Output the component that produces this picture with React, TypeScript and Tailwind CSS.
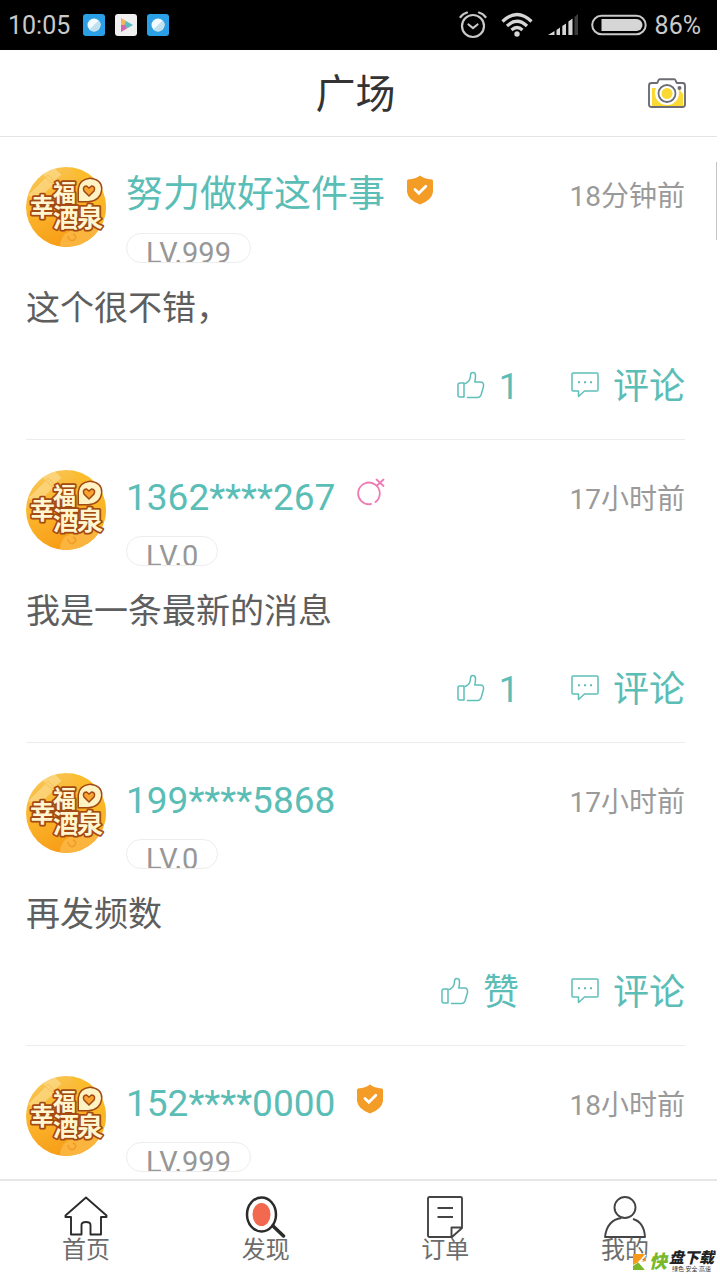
import React from "react";

type Badge = "shield" | "female" | null;

interface Post {
  name: string;
  badge: Badge;
  level: string;
  time: string;
  text: string;
  likes: string;
}

const posts: Post[] = [
  { name: "努力做好这件事", badge: "shield", level: "LV.999", time: "18分钟前", text: "这个很不错，", likes: "1" },
  { name: "1362****267", badge: "female", level: "LV.0", time: "17小时前", text: "我是一条最新的消息", likes: "1" },
  { name: "199****5868", badge: null, level: "LV.0", time: "17小时前", text: "再发频数", likes: "赞" },
  { name: "152****0000", badge: "shield", level: "LV.999", time: "18小时前", text: "", likes: "赞" },
];

function AppTile() {
  return (
    <svg width="24" height="24" viewBox="0 0 24 24" aria-hidden="true">
      <rect x="1" y="1" width="22" height="22" rx="3" fill="#2ba0e6" />
      <circle cx="12" cy="12" r="6.5" fill="#f4fbff" />
      <path d="M16.6 7.4A6.5 6.5 0 0 1 7.4 16.6Z" fill="#c3e0ee" />
    </svg>
  );
}

function PlayTile() {
  return (
    <svg width="24" height="24" viewBox="0 0 24 24" aria-hidden="true">
      <rect x="1" y="1" width="22" height="22" rx="3" fill="#f1f0f0" />
      <path d="M7 5V19L13 12Z" fill="#c96bb4" />
      <path d="M7 5L13 8.5L11 14L7 12Z" fill="#f2b45c" />
      <path d="M12 8L19 12L13 15.500L10.500 12Z" fill="#5cbdc0" />
      <path d="M7 12L11 12L13 15.500L7 19Z" fill="#d265ac" />
    </svg>
  );
}

function StatusBar() {
  return (
    <div className="mr-[3px] flex h-[50px] shrink-0 items-center bg-black pr-4 pl-2 text-[25px] leading-none text-[#c9c9c9]">
      <span className="mr-3">10:05</span>
      <div className="flex gap-2">
        <AppTile />
        <PlayTile />
        <AppTile />
      </div>
      <div className="ml-auto flex items-center">
        <svg className="mr-3.5" width="28" height="28" viewBox="0 0 28 28" fill="none" stroke="#c9c9c9" strokeWidth="2.2" strokeLinecap="round" aria-hidden="true">
          <circle cx="14" cy="15" r="11" />
          <path d="M9.500 13.500L14 17L18.500 13.500" />
          <path d="M1.500 6Q4 2.500 8 1.500M26.500 6Q24 2.500 20 1.500" />
        </svg>
        <svg className="mr-3.5" width="32" height="26" viewBox="0 0 32 26" fill="none" stroke="#d6d6d6" strokeWidth="3.2" aria-hidden="true">
          <path d="M1.500 9.500Q16 -4.500 30.500 9.500" />
          <path d="M6 14Q16 4.500 26 14" />
          <path d="M10.500 18Q16 13 21.500 18" />
          <circle cx="16" cy="22" r="2.7" fill="#d6d6d6" stroke="none" />
        </svg>
        <svg className="mr-3" width="32" height="22" viewBox="0 0 32 22" fill="#d6d6d6" aria-hidden="true">
          <path d="M1 21L7.500 17V21ZM9.500 16L13 13.500V21H9.500ZM15.300 12L19 9.500V21H15.300ZM21.400 7.500L25.500 4.500V21H21.400Z" />
          <path d="M27.500 3L31 0V21H27.500Z" fill="#3c3c3c" />
        </svg>
        <svg className="mr-2" width="56" height="22" viewBox="0 0 56 22" fill="none" aria-hidden="true">
          <rect x="1.200" y="1.700" width="53.500" height="18.600" rx="9.300" stroke="#c9c9c9" strokeWidth="2" />
          <path d="M10.500 5H45.500A6 6 0 0 1 45.500 17H10.500Z" fill="#d6d6d6" />
        </svg>
        <span>86%</span>
      </div>
    </div>
  );
}

function CameraIcon() {
  return (
    <svg width="38" height="30" viewBox="0 0 38 30" fill="none" aria-hidden="true">
      <path d="M4 10H12L18 6H26L31 11L35 16V28H4Z" fill="#fbd935" />
      <circle cx="19" cy="15" r="12" fill="#fff" />
      <path d="M11 3.500H27L35 7V14L28 8L19 5L10 8Z" fill="#fff" />
      <circle cx="19" cy="15.500" r="5.500" fill="#fbd935" />
      <circle cx="19" cy="15.500" r="8.500" stroke="#6e6c74" strokeWidth="1.800" />
      <path d="M3.500 5H9C10 5 10 1.200 11.500 1.200H26.500C28 1.200 28 5 29 5H34.500Q37 5 37 7.500V26.500Q37 29 34.500 29H3.500Q1 29 1 26.500V7.500Q1 5 3.500 5Z" stroke="#6e6c74" strokeWidth="1.900" />
      <circle cx="31.500" cy="10" r="2" fill="#6e6c74" />
    </svg>
  );
}

function Avatar() {
  return (
    <svg className="shrink-0" width="80" height="80" viewBox="0 0 80 80" role="img" aria-label="幸福酒泉">
      <defs>
        <linearGradient id="gold" x1="0" y1="0" x2="0.500" y2="1">
          <stop offset="0" stopColor="#f8cb62" />
          <stop offset="0.450" stopColor="#fbb62c" />
          <stop offset="1" stopColor="#f79b16" />
        </linearGradient>
        <clipPath id="disc">
          <circle cx="40" cy="40" r="40" />
        </clipPath>
      </defs>
      <g clipPath="url(#disc)">
        <rect width="80" height="80" fill="url(#gold)" />
        <path d="M44 0H80V80H60Q76 30 44 0Z" fill="#fbbd28" opacity="0.700" />
        <path d="M2 28L22 8L30 16L10 34ZM14 6L26 -2L36 8L26 16Z" fill="#fcdf98" stroke="#f5c25a" opacity="0.600" />
        <path d="M34 80Q34 68 44 64Q62 60 80 64V80Z" fill="#fbb43e" />
        <path d="M42 69Q43 75 48 73Q52 69 47 67" fill="none" stroke="#f29b2a" strokeWidth="1.500" />
      </g>
      <g className="font-['Noto_Sans_CJK_SC',sans-serif] font-bold" fill="#fff6cf" stroke="#a34a14" strokeWidth="3.500" strokeLinejoin="round" paintOrder="stroke">
        <text x="4" y="49" fontSize="25">幸</text>
        <text x="27" y="34" fontSize="23">福</text>
        <text x="27" y="60" fontSize="26">酒</text>
        <text x="51" y="60" fontSize="26">泉</text>
      </g>
      <path d="M53 34V22Q54 13 64 12Q75 13 75 22Q74 33 62 34Z" fill="#fff3c4" stroke="#a34a14" strokeWidth="3" paintOrder="stroke" />
      <path d="M63 29L58 24Q56 19.500 60.500 19L63 21L65.500 19Q70 19.500 68 24Z" fill="#f7a530" stroke="#a34a14" strokeWidth="1.500" />
    </svg>
  );
}

function ShieldIcon() {
  return (
    <svg width="26" height="30" viewBox="0 0 26 30" aria-hidden="true">
      <path d="M13 0.500Q17 4 25 4.500Q26 5 26 6V17Q25 25 13 29.500Q1 25 0 17V6Q0 5 1 4.500Q9 4 13 0.500Z" fill="#f39c26" />
      <path d="M8 14.500L11.800 18.200L18.800 11.200" fill="none" stroke="#fff" strokeWidth="2.800" strokeLinecap="round" />
    </svg>
  );
}

function FemaleIcon() {
  return (
    <svg width="28" height="28" viewBox="0 0 28 28" fill="none" stroke="#f07bb4" strokeWidth="1.800" strokeLinecap="round" aria-hidden="true">
      <path d="M14 26A10.800 10.800 0 1 1 18.500 24M19.500 8L26.500 1.500M19.500 1.500L26.500 8" />
    </svg>
  );
}

function ThumbIcon() {
  return (
    <svg width="28" height="28" viewBox="0 0 28 28" fill="none" stroke="#5fbfb8" strokeWidth="1.500" strokeLinecap="round" strokeLinejoin="round" aria-hidden="true">
      <path d="M7 12H2.800Q1 12 1 14V24Q1 26 2.800 26H7ZM10.500 26.500H20.500Q23 26.500 24 24L26.500 15.500Q27 11 23.500 11H17.800Q18.500 8 18.500 4.500Q18.500 1.500 15.800 1.500Q13.500 1.500 13.500 4.500Q13.500 10 8.500 12.500" />
    </svg>
  );
}

function CommentIcon() {
  return (
    <svg width="28" height="26" viewBox="0 0 28 26" fill="none" stroke="#5fbfb8" strokeWidth="1.500" strokeLinejoin="round" aria-hidden="true">
      <path d="M2 1H26Q27 1 27 2V18Q27 19 26 19H13.500L7.500 24.500V19H2Q1 19 1 18V2Q1 1 2 1Z" />
      <path d="M7 10.300H9M13 10.300H15M19 10.300H21" strokeWidth="2" />
    </svg>
  );
}

function PostItem({ post }: { post: Post }) {
  return (
    <article className="mr-[35px] ml-[26px] border-b border-[#ececec] pt-[30px] pb-8">
      <div className="flex items-start">
        <Avatar />
        <div className="ml-5 pt-2">
          <div className="flex h-10 items-center">
            <h2 className="mr-[22px] text-[37px] leading-10 whitespace-nowrap text-[#5abdb6]">{post.name}</h2>
            {post.badge === "shield" && <div className="pb-2.5"><ShieldIcon /></div>}
            {post.badge === "female" && <div className="pb-3"><FemaleIcon /></div>}
          </div>
          <div className="mt-[18px] h-[30px] w-fit overflow-hidden rounded-[15px] border border-[#ededed] px-[19px] text-[29px] leading-[38px] text-[#979797]">
            {post.level}
          </div>
        </div>
        <time className="ml-auto pt-2.5 text-[28px] leading-10 whitespace-nowrap text-[#9a9a9a]">{post.time}</time>
      </div>
      <p className="mt-[25px] h-10 text-[34px] leading-10 text-[#5e5e5e]">{post.text}</p>
      <div className="mt-[39px] flex h-10 items-center justify-end gap-[52px] text-[36px] leading-10 text-[#5abdb6]">
        <button type="button" className="flex items-center gap-3.5">
          <span className="pb-1"><ThumbIcon /></span>
          <span>{post.likes}</span>
        </button>
        <button type="button" className="flex items-center gap-3.5">
          <span className="pb-1"><CommentIcon /></span>
          <span>评论</span>
        </button>
      </div>
    </article>
  );
}

function HomeIcon() {
  return (
    <svg width="44" height="42" viewBox="0 0 44 42" fill="none" stroke="#2b2b2b" strokeWidth="1.900" strokeLinejoin="round" aria-hidden="true">
      <path d="M22 1.500L1.500 19.500V21H7V38.500H17.500V29Q17.500 26 22 26Q26.500 26 26.500 29V38.500H37V21H42.500V19.500Z" />
    </svg>
  );
}

function DiscoverIcon() {
  return (
    <svg width="42" height="42" viewBox="0 0 42 42" fill="none" stroke="#2b2b2b" aria-hidden="true">
      <ellipse cx="16.500" cy="18.500" rx="14.500" ry="17" strokeWidth="2.500" />
      <ellipse cx="16.500" cy="18.500" rx="9" ry="11.500" fill="#f2694f" stroke="none" />
      <path d="M28 30L38.500 40" strokeWidth="3.500" strokeLinecap="round" />
    </svg>
  );
}

function OrderIcon() {
  return (
    <svg width="36" height="42" viewBox="0 0 36 42" fill="none" stroke="#444" strokeWidth="1.900" strokeLinejoin="round" aria-hidden="true">
      <path d="M2.500 1H33.500Q35 1 35 2.500V32L25 41H2.500Q1 41 1 39.500V2.500Q1 1 2.500 1ZM24.500 41V31.500H35M10.500 12H26M10.500 21H26" />
    </svg>
  );
}

function ProfileIcon() {
  return (
    <svg width="42" height="42" viewBox="0 0 42 42" fill="none" stroke="#444" strokeWidth="1.900" strokeLinejoin="round" aria-hidden="true">
      <circle cx="21" cy="11.500" r="10.500" />
      <path d="M17.500 22Q3 24 1 41H41Q40 26 29 23" />
    </svg>
  );
}

const tabs = [
  { label: "首页", icon: <HomeIcon /> },
  { label: "发现", icon: <DiscoverIcon /> },
  { label: "订单", icon: <OrderIcon /> },
  { label: "我的", icon: <ProfileIcon /> },
];

function Watermark() {
  return (
    <div className="absolute right-1.5 bottom-2 flex items-center">
      <svg width="14" height="18" viewBox="0 0 14 18" aria-hidden="true">
        <path d="M0 1H12L6 9L0 12Z" fill="#f79a1c" />
        <path d="M0 17V13L6 9L12 17Z" fill="#78b82a" />
        <path d="M13 2L6 9L13 17" fill="none" stroke="#fff" strokeWidth="1.500" />
        <path d="M13 3V8L9 9Z" fill="#f79a1c" />
      </svg>
      <span className="mx-0.5 text-[18px] leading-5 font-black text-[#78b82a] italic">快</span>
      <span className="flex flex-col items-center">
        <span className="text-[15px] leading-[13px] font-black text-[#222] italic">盘下载</span>
        <span className="text-[6px] leading-[7px] text-[#333]">绿色·安全·高速</span>
      </span>
    </div>
  );
}

export default function App() {
  return (
    <div className="relative flex h-screen flex-col overflow-hidden bg-white font-[Roboto,'Noto_Sans_CJK_SC',sans-serif]">
      <StatusBar />
      <header className="mr-[3px] flex h-[87px] shrink-0 items-center border-b border-[#e4e4e4] pr-[31px] pl-[25px]">
        <div className="flex-1" />
        <h1 className="pt-1 text-[40px] leading-none text-[#333]">广场</h1>
        <div className="flex flex-1 justify-end">
          <button type="button" aria-label="拍照">
            <CameraIcon />
          </button>
        </div>
      </header>
      <main className="relative min-h-0 flex-1 overflow-hidden">
        {posts.map((post) => (
          <PostItem key={post.name} post={post} />
        ))}
        <div className="absolute top-[25px] right-[3px] h-[78px] w-px bg-[#c4c4c4]" />
      </main>
      <nav className="mr-[3px] flex h-[101px] shrink-0 items-start justify-between border-t-2 border-[#e6e6e6] pr-[68px] pl-[62px]">
        {tabs.map((tab) => (
          <a key={tab.label} href="#" className="flex w-12 flex-col items-center text-[#6c6c6c]">
            <span className="flex h-[57px] items-end justify-center">{tab.icon}</span>
            <span className="text-[24px] leading-6 whitespace-nowrap">{tab.label}</span>
          </a>
        ))}
      </nav>
      <Watermark />
    </div>
  );
}
